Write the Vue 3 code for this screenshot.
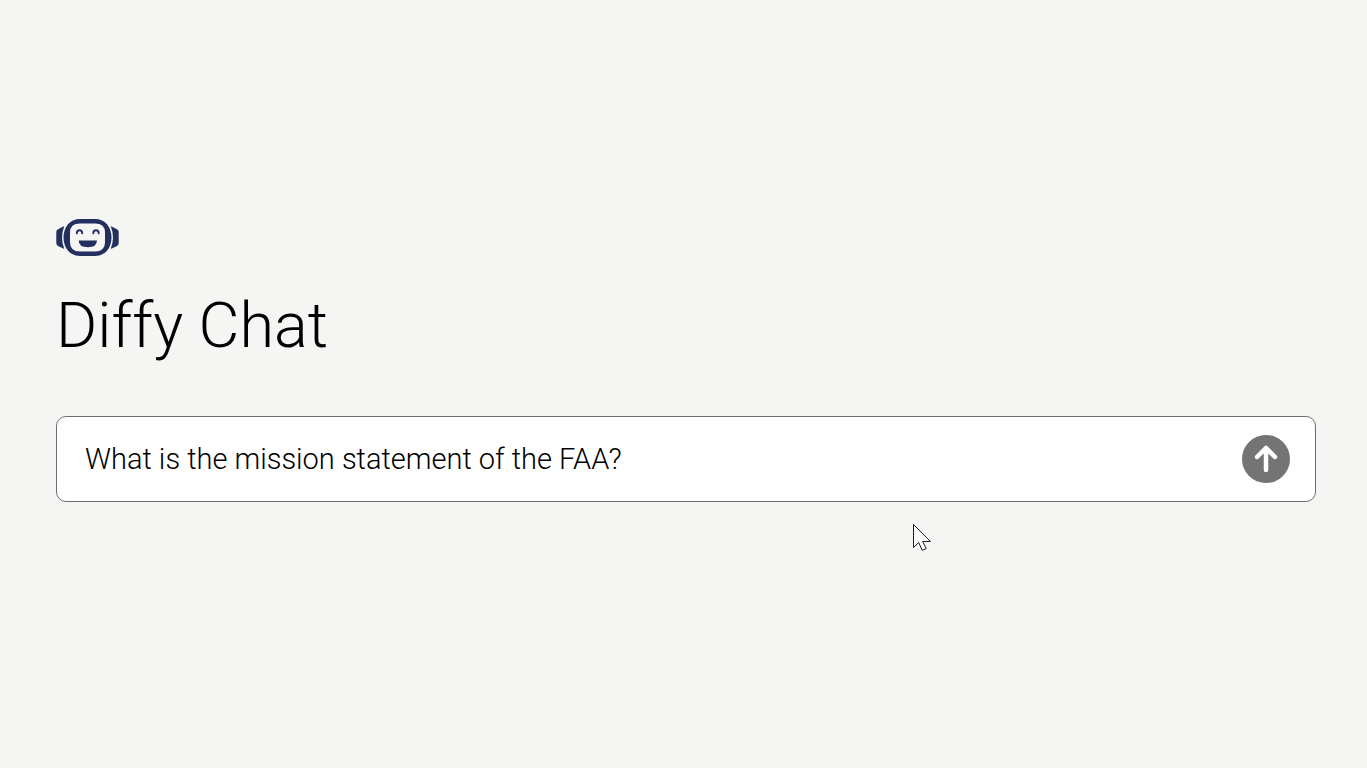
<script setup>
import { ref } from 'vue'

const question = ref('What is the mission statement of the FAA?')
</script>

<template>
  <main class="page">
    <svg class="logo" viewBox="0 0 63 38" aria-hidden="true">
      <path d="M8.300 7 2 10.200Q0.300 11 0.300 13v11q0 2 1.700 3l6.300 3Q3.800 18.500 8.300 7Z" fill="#232f5e" />
      <path d="M54.700 7 61 10.200Q62.700 11 62.700 13v11q0 2-1.700 3l-6.300 3Q59.200 18.500 54.700 7Z" fill="#232f5e" />
      <path d="M24 0h15c10 0 16.500 8 16.500 18.500S49 37 39 37H24C14 37 7.500 29 7.500 18.500S14 0 24 0Z" fill="#232f5e" />
      <path d="M24 4.500h15q10 0 10 9v10q0 9-10 9H24q-10 0-10-9v-10q0-9 10-9Z" fill="#f5f5f3" />
      <path d="M20.800 14.300q0-3 2.700-3t2.700 3M37.300 14.300q0-3 2.700-3t2.700 3" fill="none" stroke="#232f5e" stroke-width="1.900" stroke-linecap="round" />
      <path d="M22.700 21.500h18.300q0 6.800-9.150 6.800t-9.150-6.800Z" fill="#232f5e" />
    </svg>
    <h1 class="title">Diffy Chat</h1>
    <form class="prompt" @submit.prevent>
      <input v-model="question" class="question" type="text" aria-label="Question" />
      <button class="send" type="submit" aria-label="Send">
        <svg viewBox="0 0 48 48" aria-hidden="true">
          <path d="M24 35V13M15 22l9-9 9 9" fill="none" stroke="#fff" stroke-width="4.500" stroke-linecap="round" stroke-linejoin="round" />
        </svg>
      </button>
    </form>
    <svg class="pointer" viewBox="0 0 20 28" aria-hidden="true">
      <path d="M1.500 1.500v23l5.200-5 3.500 7.800 4-1.600-3.500-7.200h7.700Z" fill="#fff" stroke="#1c1c26" stroke-width="1" />
    </svg>
  </main>
</template>

<style>
body {
  margin: 0;
  background: #f5f5f3;
}
</style>

<style scoped>
.page {
  position: relative;
  box-sizing: border-box;
  min-height: 100vh;
  padding: 219px 51px 48px 56px;
  font-family: Roboto, "Liberation Sans", sans-serif;
  font-weight: 350;
  color: #000;
}

.logo {
  display: block;
  width: 63px;
  height: 38px;
}

.title {
  margin: 32px 0 53px;
  font-size: 63px;
  line-height: 74px;
  font-weight: 350;
}

.prompt {
  display: flex;
  align-items: center;
  gap: 24px;
  padding: 18px 25px 18px 28px;
  border: 1px solid #706e6b;
  border-radius: 10px;
  background: #fff;
}

.question {
  flex: 1;
  min-width: 0;
  height: 48px;
  padding: 0;
  border: 0;
  outline: 0;
  background: transparent;
  color: inherit;
  font: inherit;
  font-size: 29px;
}

.send {
  flex: none;
  width: 48px;
  height: 48px;
  padding: 0;
  border: 0;
  border-radius: 50%;
  background: #747474;
  cursor: pointer;
}

.send svg {
  display: block;
  width: 100%;
  height: 100%;
}

.pointer {
  position: absolute;
  top: 523px;
  left: 912px;
  width: 20px;
  height: 28px;
  pointer-events: none;
}
</style>
